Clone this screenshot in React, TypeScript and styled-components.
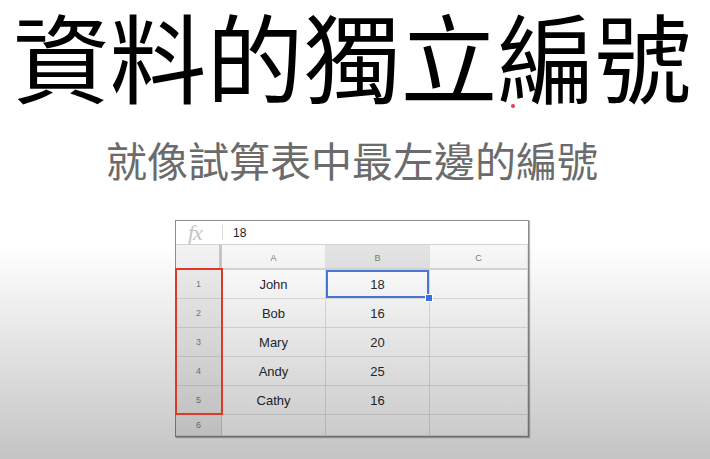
import React from "react";
import styled, { createGlobalStyle } from "styled-components";

const Global = createGlobalStyle`
  html, body { margin: 0; padding: 0; background: #ffffff; }
  body { font-family: "Liberation Sans", Arial, sans-serif; }
`;

const Page = styled.div`
  position: relative;
  width: 710px;
  height: 459px;
  overflow: hidden;
  background: #ffffff;
  display: flex;
  flex-direction: column;
  align-items: center;
  padding-right: 6px;
  box-sizing: border-box;
  &::after {
    content: "";
    position: absolute;
    inset: 0;
    pointer-events: none;
    background: linear-gradient(
      to bottom,
      rgba(0, 0, 0, 0) 0px,
      rgba(0, 0, 0, 0) 245px,
      rgba(0, 0, 0, 0.23) 459px
    );
  }
`;

const TitleWrap = styled.div`
  position: relative;
`;

const Title = styled.h1`
  margin: 0;
  font-family: "Noto Sans CJK TC", "Noto Sans CJK SC", sans-serif;
  font-weight: 400;
  font-size: 97px;
  line-height: 107px;
  color: #000000;
  white-space: nowrap;
`;

const RedDot = styled.span`
  position: absolute;
  left: 498px;
  top: 104px;
  width: 4px;
  height: 4px;
  border-radius: 50%;
  background: #e0414f;
`;

const Subtitle = styled.h2`
  margin: 32px 0 0;
  font-family: "Noto Sans CJK TC", "Noto Sans CJK SC", sans-serif;
  font-weight: 400;
  font-size: 41px;
  line-height: 41px;
  color: #6b6b6b;
  white-space: nowrap;
`;

const Sheet = styled.div`
  position: relative;
  margin-top: 40px;
  width: 354px;
  box-sizing: border-box;
  border: 1px solid #8c8c8c;
  box-shadow: 1px 1px 1px rgba(0, 0, 0, 0.3);
  background: #ffffff;
`;

const FormulaBar = styled.div`
  display: flex;
  align-items: center;
  height: 24px;
  box-sizing: border-box;
  border-bottom: 1px solid #d4d4d4;
  background: #ffffff;
`;

const Fx = styled.span`
  width: 46px;
  box-sizing: border-box;
  padding-left: 12px;
  font-family: "Liberation Serif", "Times New Roman", serif;
  font-style: italic;
  font-size: 22px;
  line-height: 22px;
  color: #c4c4c4;
  letter-spacing: -1px;
`;

const FxDivider = styled.span`
  width: 1px;
  height: 15px;
  background: #dcdcdc;
`;

const FormulaValue = styled.span`
  margin-left: 10px;
  font-size: 12px;
  color: #222222;
`;

const Grid = styled.div`
  display: grid;
  grid-template-columns: 46px 104px 104px 98px;
  grid-template-rows: 25px repeat(5, 29px) 21px;
`;

const Cell = styled.div`
  display: flex;
  align-items: center;
  justify-content: center;
  box-sizing: border-box;
  border-right: 1px solid #e1e1e1;
  border-bottom: 1px solid #e1e1e1;
  position: relative;
`;

const Corner = styled(Cell)`
  background: #f3f3f3;
  border-right: 3px solid #c6c6c6;
  border-bottom: 2px solid #d4d4d4;
`;

const ColHeader = styled(Cell)<{ $active?: boolean }>`
  background: ${(p) => (p.$active ? "#e4e4e4" : "#f8f8f8")};
  border-bottom: 2px solid #d8d8d8;
  font-size: 9px;
  color: #7a7a7a;
  padding-top: 2px;
`;

const RowHeader = styled(Cell)`
  background: #efefef;
  border-right: 1px solid #cfcfcf;
  border-bottom: 1px solid #d6d6d6;
  font-size: 9px;
  color: #7e7e7e;
`;

const DataCell = styled(Cell)<{ $selected?: boolean }>`
  background: #ffffff;
  font-size: 13px;
  color: #2a2a2a;
  box-shadow: ${(p) => (p.$selected ? "inset 0 0 0 2px #4a7bdc" : "none")};
  &::after {
    content: "";
    display: ${(p) => (p.$selected ? "block" : "none")};
    position: absolute;
    right: -4px;
    bottom: -4px;
    width: 6px;
    height: 6px;
    background: #3b6fe0;
    border: 1px solid #ffffff;
    z-index: 2;
  }
`;

const RowMark = styled.div`
  position: absolute;
  left: -1px;
  top: 47px;
  width: 48px;
  height: 147px;
  box-sizing: border-box;
  border: 2px solid #dc3a29;
  pointer-events: none;
  z-index: 3;
`;

const columns = ["A", "B", "C"];
const rows: [string, string][] = [
  ["John", "18"],
  ["Bob", "16"],
  ["Mary", "20"],
  ["Andy", "25"],
  ["Cathy", "16"],
  ["", ""],
];

export default function App() {
  return (
    <>
      <Global />
      <Page>
        <TitleWrap>
          <Title>資料的獨立編號</Title>
          <RedDot />
        </TitleWrap>
        <Subtitle>就像試算表中最左邊的編號</Subtitle>
        <Sheet>
          <FormulaBar>
            <Fx>fx</Fx>
            <FxDivider />
            <FormulaValue>18</FormulaValue>
          </FormulaBar>
          <Grid>
            <Corner />
            {columns.map((c) => (
              <ColHeader key={c} $active={c === "B"}>
                {c}
              </ColHeader>
            ))}
            {rows.map((r, i) => (
              <React.Fragment key={i}>
                <RowHeader>{i + 1}</RowHeader>
                <DataCell>{r[0]}</DataCell>
                <DataCell $selected={i === 0}>{r[1]}</DataCell>
                <DataCell />
              </React.Fragment>
            ))}
          </Grid>
          <RowMark />
        </Sheet>
      </Page>
    </>
  );
}
